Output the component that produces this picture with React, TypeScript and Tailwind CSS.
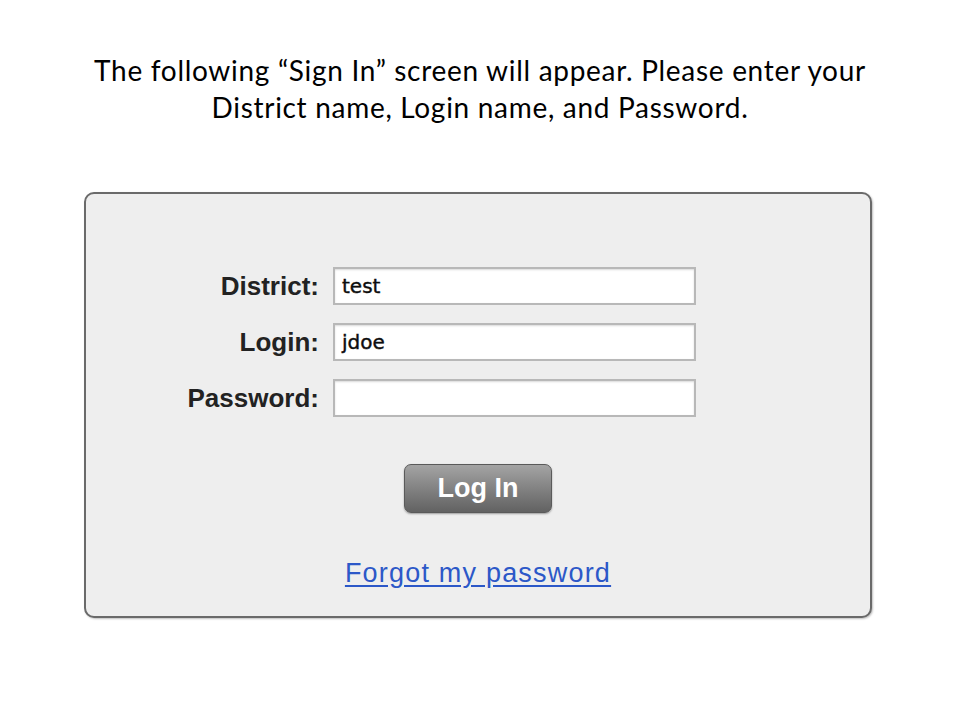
const fields = [
  { label: "District:", value: "test" },
  { label: "Login:", value: "jdoe" },
  { label: "Password:", value: "" },
]

const SignIn = () => {
  return (
    <div className="ml-[84px] mt-[66px] w-[788px] h-[426px] rounded-[10px] border-2 border-[#6a6a6a] bg-[#eeeeee] shadow-[1px_1px_2px_rgba(0,0,0,0.25)] flex flex-col items-center">
      <div className="self-start ml-[97px] mt-[73px] flex flex-col gap-[18px]">
        {fields.map((f) => (
          <div key={f.label} className="flex items-center gap-[14px]">
            <div className="w-[136px] text-right whitespace-nowrap font-['Liberation_Sans',Arial,sans-serif] font-bold text-[26px] leading-none text-[#222]">
              {f.label}
            </div>
            <div className="w-[363px] h-[38px] bg-white border-2 border-[#b8b8b8] shadow-[inset_0_1px_2px_rgba(0,0,0,0.15)] flex items-center pl-[7px] font-['DejaVu_Sans',sans-serif] text-[20px] text-[#0d0d0d] [-webkit-text-stroke:0.4px_#0d0d0d]">
              {f.value}
            </div>
          </div>
        ))}
      </div>

      <button className="mt-[47px] w-[148px] h-[49px] rounded-[7px] border border-[#5a5a5a] bg-gradient-to-b from-[#a4a4a4] to-[#626262] shadow-[0_1px_2px_rgba(0,0,0,0.35)] text-white font-['Liberation_Sans',Arial,sans-serif] font-bold text-[27px] leading-none">
        Log In
      </button>

      <a
        href="#"
        className="mt-[44px] font-['Liberation_Sans',Arial,sans-serif] text-[27px] leading-[32px] tracking-[1.2px] text-[#2c58c8] underline underline-offset-[3px]"
      >
        Forgot my password
      </a>
    </div>
  )
}

export default function App() {
  return (
    <div className="w-[960px] h-[720px] bg-white overflow-hidden">
      <div className="pt-[52px] text-center font-['Lato','Open_Sans',sans-serif] text-[28px] leading-[37px] tracking-[0.7px] text-black">
        The following “Sign In” screen will appear. Please enter your
        <br />
        District name, Login name, and Password.
      </div>
      <SignIn />
    </div>
  )
}
